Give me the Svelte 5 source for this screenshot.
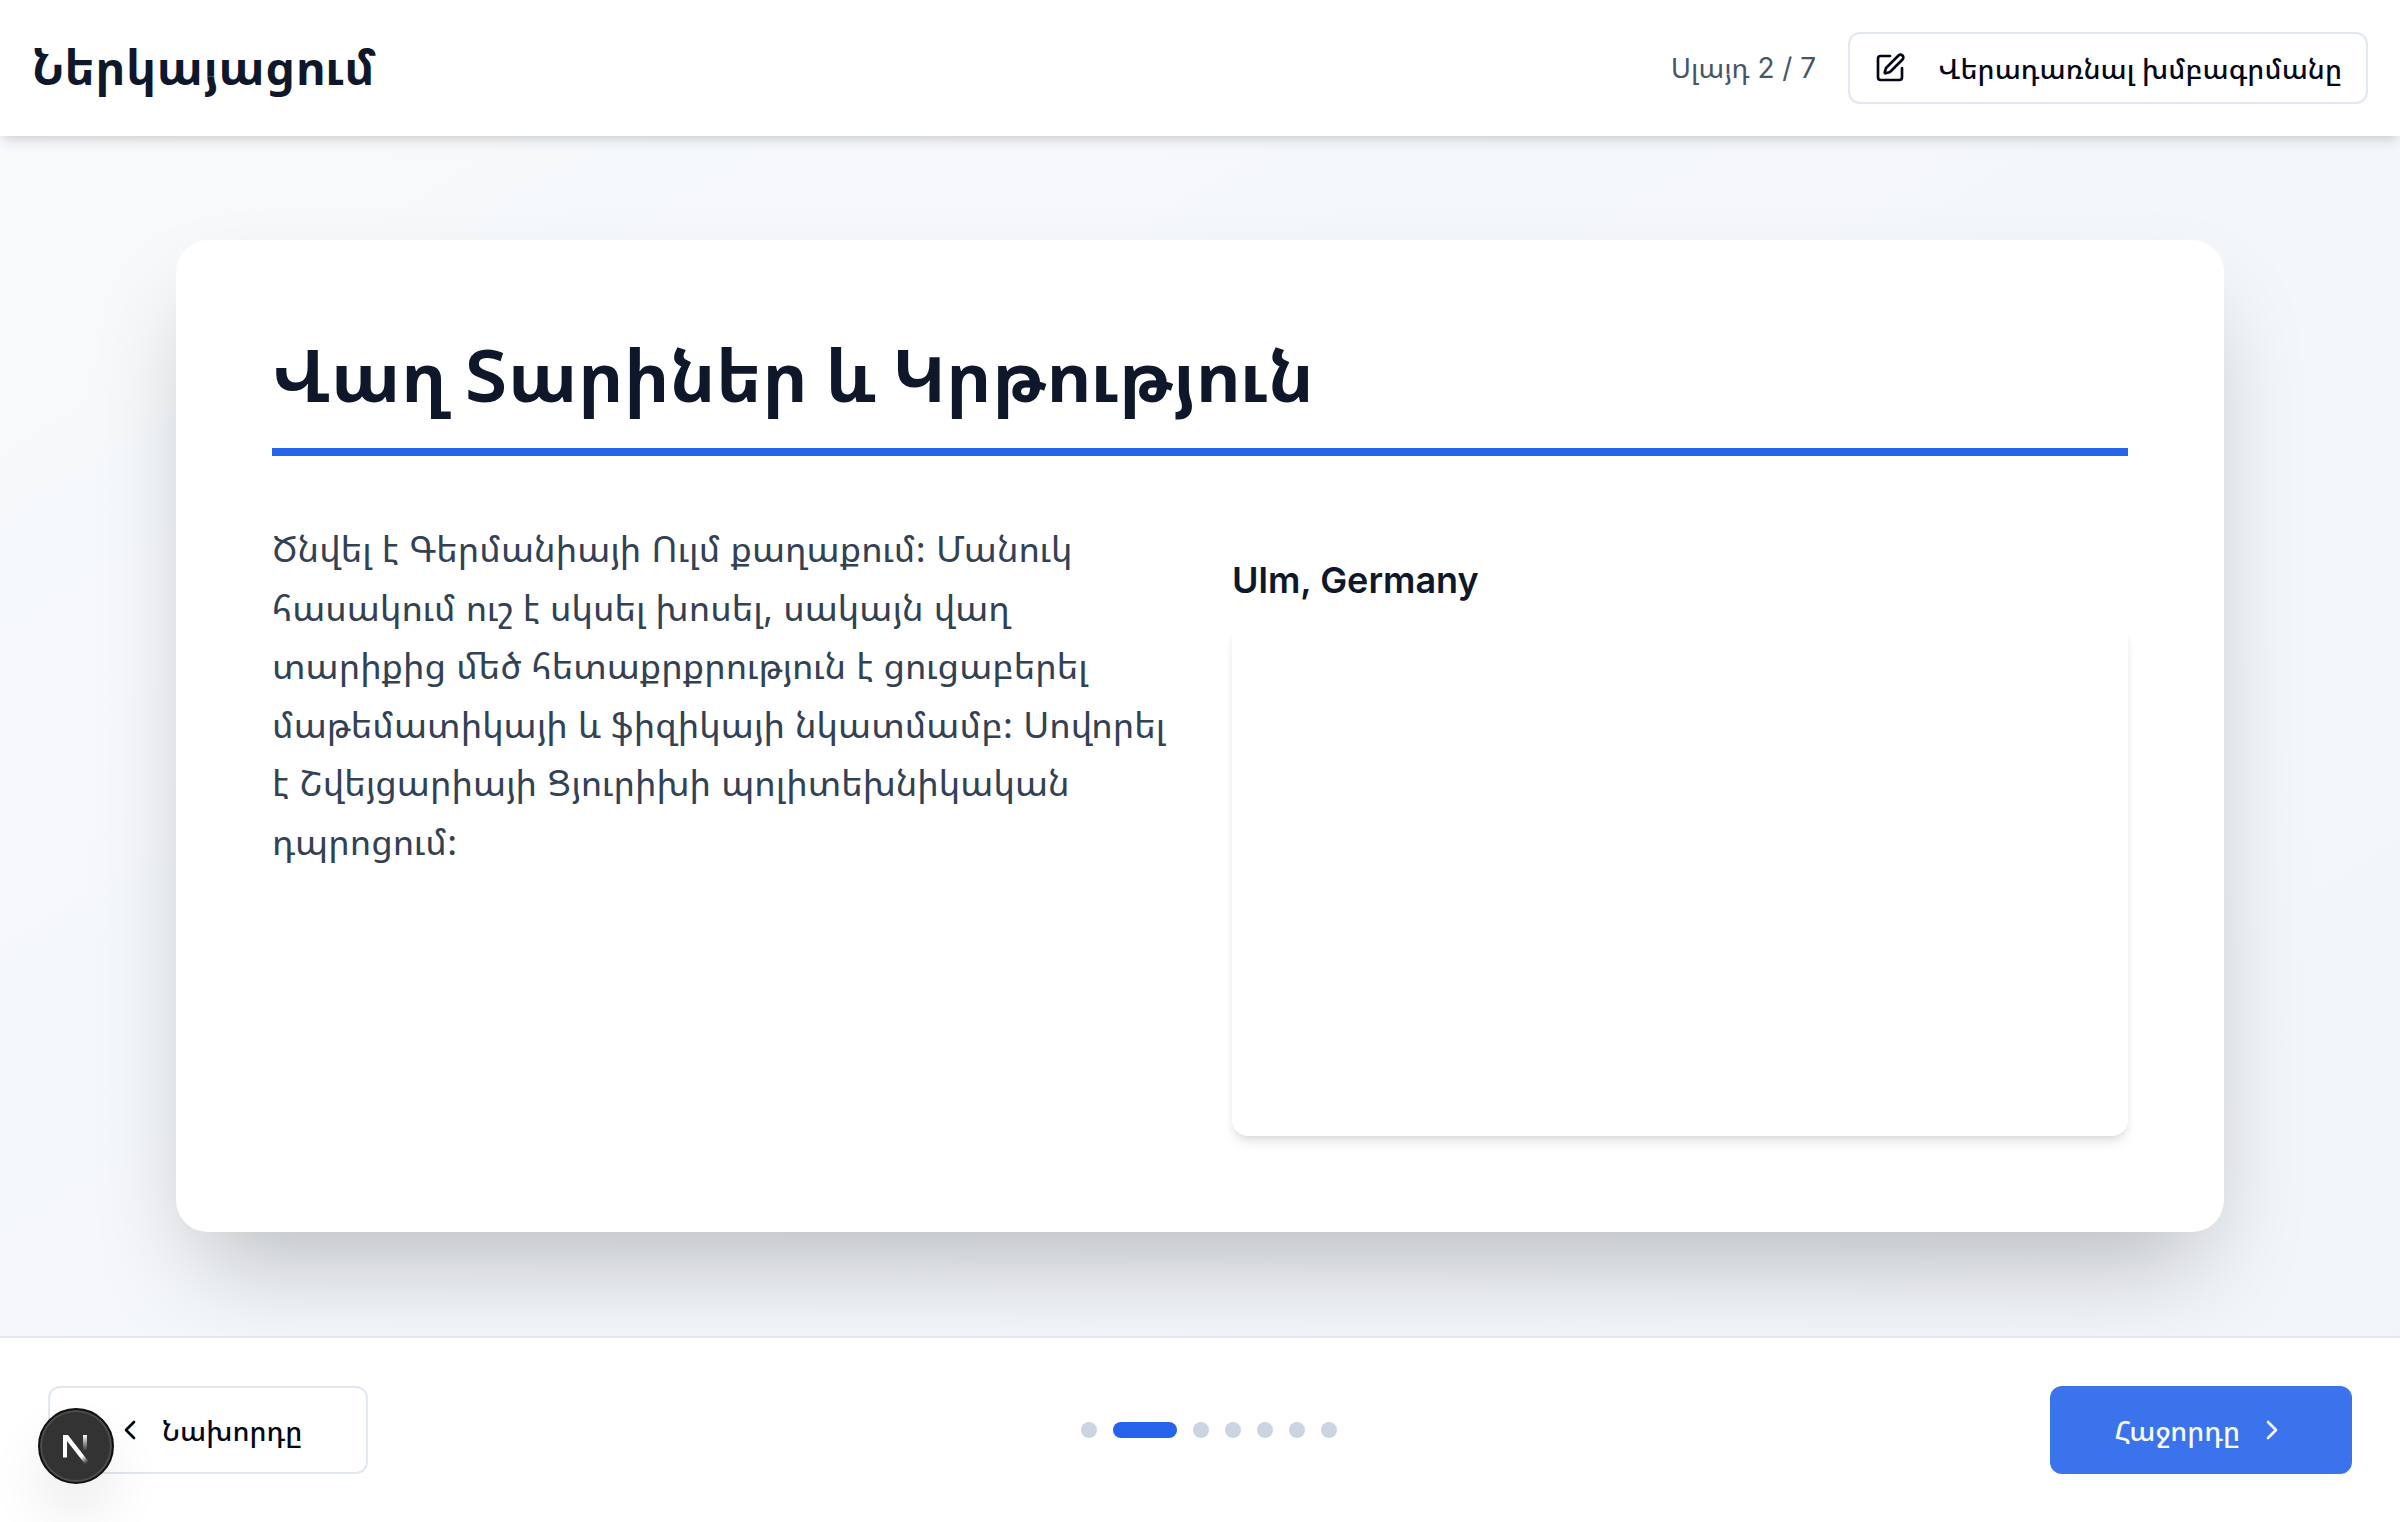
<script>
  const slides = Array.from({ length: 7 }, (_, i) => i + 1);
  let current = $state(2);
</script>

<div class="page">
  <header>
    <h1>Ներկայացում</h1>
    <div class="tools">
      <span class="count">Սլայդ {current} / {slides.length}</span>
      <button class="outline edit">
        <svg viewBox="0 0 24 24" aria-hidden="true"><path d="M12 3H5a2 2 0 0 0-2 2v14a2 2 0 0 0 2 2h14a2 2 0 0 0 2-2v-7" /><path d="M18.375 2.625a1 1 0 0 1 3 3l-9.013 9.014a2 2 0 0 1-.853.505l-2.873.84a.5.5 0 0 1-.62-.62l.84-2.873a2 2 0 0 1 .506-.852z" /></svg>
        Վերադառնալ խմբագրմանը
      </button>
    </div>
  </header>

  <main>
    <article>
      <h2>Վաղ Տարիներ և Կրթություն</h2>
      <div class="columns">
        <p>Ծնվել է Գերմանիայի Ուլմ քաղաքում: Մանուկ հասակում ուշ է սկսել խոսել, սակայն վաղ տարիքից մեծ հետաքրքրություն է ցուցաբերել մաթեմատիկայի և ֆիզիկայի նկատմամբ: Սովորել է Շվեյցարիայի Ցյուրիխի պոլիտեխնիկական դպրոցում:</p>
        <section>
          <h3>Ulm, Germany</h3>
          <div class="map"></div>
        </section>
      </div>
    </article>
  </main>

  <footer>
    <button class="outline prev" onclick={() => (current = Math.max(1, current - 1))}>
      <svg viewBox="0 0 24 24" aria-hidden="true"><path d="m15 18-6-6 6-6" /></svg>
      Նախորդը
    </button>
    <nav aria-label="Սլայդ">
      {#each slides as n}
        <button class="dot" class:active={n === current} aria-label="Սլայդ {n}" onclick={() => (current = n)}></button>
      {/each}
    </nav>
    <button class="next" onclick={() => (current = Math.min(slides.length, current + 1))}>
      Հաջորդը
      <svg viewBox="0 0 24 24" aria-hidden="true"><path d="m9 18 6-6-6-6" /></svg>
    </button>
  </footer>

  <button class="badge" aria-label="Next.js">
    <svg viewBox="0 0 40 40" aria-hidden="true">
      <defs>
        <linearGradient id="diag" x1="22" y1="26" x2="31" y2="37" gradientUnits="userSpaceOnUse"><stop offset="0" stop-color="#fff" /><stop offset="0.4" stop-color="#fff" /><stop offset="1" stop-color="#fff" stop-opacity="0" /></linearGradient>
        <linearGradient id="stem" x1="0" y1="9" x2="0" y2="25" gradientUnits="userSpaceOnUse"><stop offset="0" stop-color="#fff" /><stop offset="1" stop-color="#fff" stop-opacity="0" /></linearGradient>
      </defs>
      <path d="M7 9h5L32.500 35.500 29 38 11 15V31.500H7z" fill="url(#diag)" stroke="none" />
      <path d="M27 9h4V25h-4z" fill="url(#stem)" stroke="none" />
    </svg>
  </button>
</div>

<style>
  :global(body) {
    margin: 0;
  }
  .page {
    min-height: 100vh;
    display: flex;
    flex-direction: column;
    box-sizing: border-box;
    font-family: Inter, "Noto Sans Armenian", "Noto Sans", sans-serif;
    color: #0f172a;
    background: linear-gradient(to bottom right, #f8fafc, #f1f5f9);
  }
  h1, h2, h3, p {
    margin: 0;
  }
  button {
    font: inherit;
    box-sizing: border-box;
    cursor: pointer;
  }
  svg {
    fill: none;
    stroke: currentColor;
    stroke-width: 2;
    stroke-linecap: round;
    stroke-linejoin: round;
  }
  header {
    display: flex;
    align-items: center;
    justify-content: space-between;
    padding: 32px;
    background: #fff;
    box-shadow: 0 8px 12px -2px rgb(0 0 0 / 0.1), 0 4px 8px -4px rgb(0 0 0 / 0.1);
  }
  h1 {
    font-size: 48px;
    line-height: 72px;
    font-weight: 700;
  }
  .tools {
    display: flex;
    align-items: center;
    gap: 32px;
  }
  .count {
    font-size: 28px;
    line-height: 40px;
    color: #475569;
  }
  .outline {
    display: flex;
    align-items: center;
    background: #fff;
    border: 2px solid #e2e8f0;
    border-radius: 12px;
    color: #020617;
    font-size: 28px;
    font-weight: 500;
  }
  .edit {
    height: 72px;
    padding: 0 24px;
    gap: 32px;
  }
  .edit svg {
    width: 32px;
    height: 32px;
  }
  main {
    flex: 1;
    display: flex;
    padding: 104px 176px;
  }
  article {
    flex: 1;
    padding: 96px;
    background: #fff;
    border-radius: 32px;
    box-shadow: 0 50px 100px -24px rgb(0 0 0 / 0.25);
  }
  h2 {
    font-size: 72px;
    line-height: 80px;
    font-weight: 700;
    padding-bottom: 32px;
    border-bottom: 8px solid #2563eb;
  }
  .columns {
    display: grid;
    grid-template-columns: 1fr 1fr;
    gap: 64px;
    margin-top: 64px;
  }
  p {
    font-size: 36px;
    line-height: 1.625;
    color: #334155;
  }
  section {
    padding-top: 32px;
  }
  h3 {
    font-size: 36px;
    line-height: 56px;
    font-weight: 600;
  }
  .map {
    height: 512px;
    margin-top: 16px;
    border-radius: 16px;
    box-shadow: 0 8px 12px -2px rgb(0 0 0 / 0.1), 0 4px 8px -4px rgb(0 0 0 / 0.1);
  }
  footer {
    display: flex;
    align-items: center;
    justify-content: space-between;
    padding: 48px;
    background: #fff;
    border-top: 2px solid #e2e8f0;
  }
  .prev, .next {
    display: flex;
    align-items: center;
    height: 88px;
    padding: 0 64px;
    gap: 16px;
    font-size: 28px;
    font-weight: 500;
  }
  .prev svg, .next svg {
    width: 32px;
    height: 32px;
  }
  .next {
    border: 0;
    border-radius: 12px;
    background: #3b73ed;
    color: #f8fafc;
  }
  nav {
    display: flex;
    gap: 16px;
  }
  .dot {
    width: 16px;
    height: 16px;
    padding: 0;
    border: 0;
    border-radius: 8px;
    background: #cbd5e1;
  }
  .active {
    width: 64px;
    background: #2563eb;
  }
  .badge {
    position: fixed;
    left: 38px;
    bottom: 38px;
    width: 76px;
    height: 76px;
    padding: 0;
    display: grid;
    place-items: center;
    border: 2px solid #111;
    border-radius: 50%;
    background: #333;
    box-shadow: inset 0 0 0 2px #4d4d4d, 0 32px 64px -16px rgb(0 0 0 / 0.24);
  }
  .badge svg {
    width: 40px;
    height: 40px;
  }
</style>
